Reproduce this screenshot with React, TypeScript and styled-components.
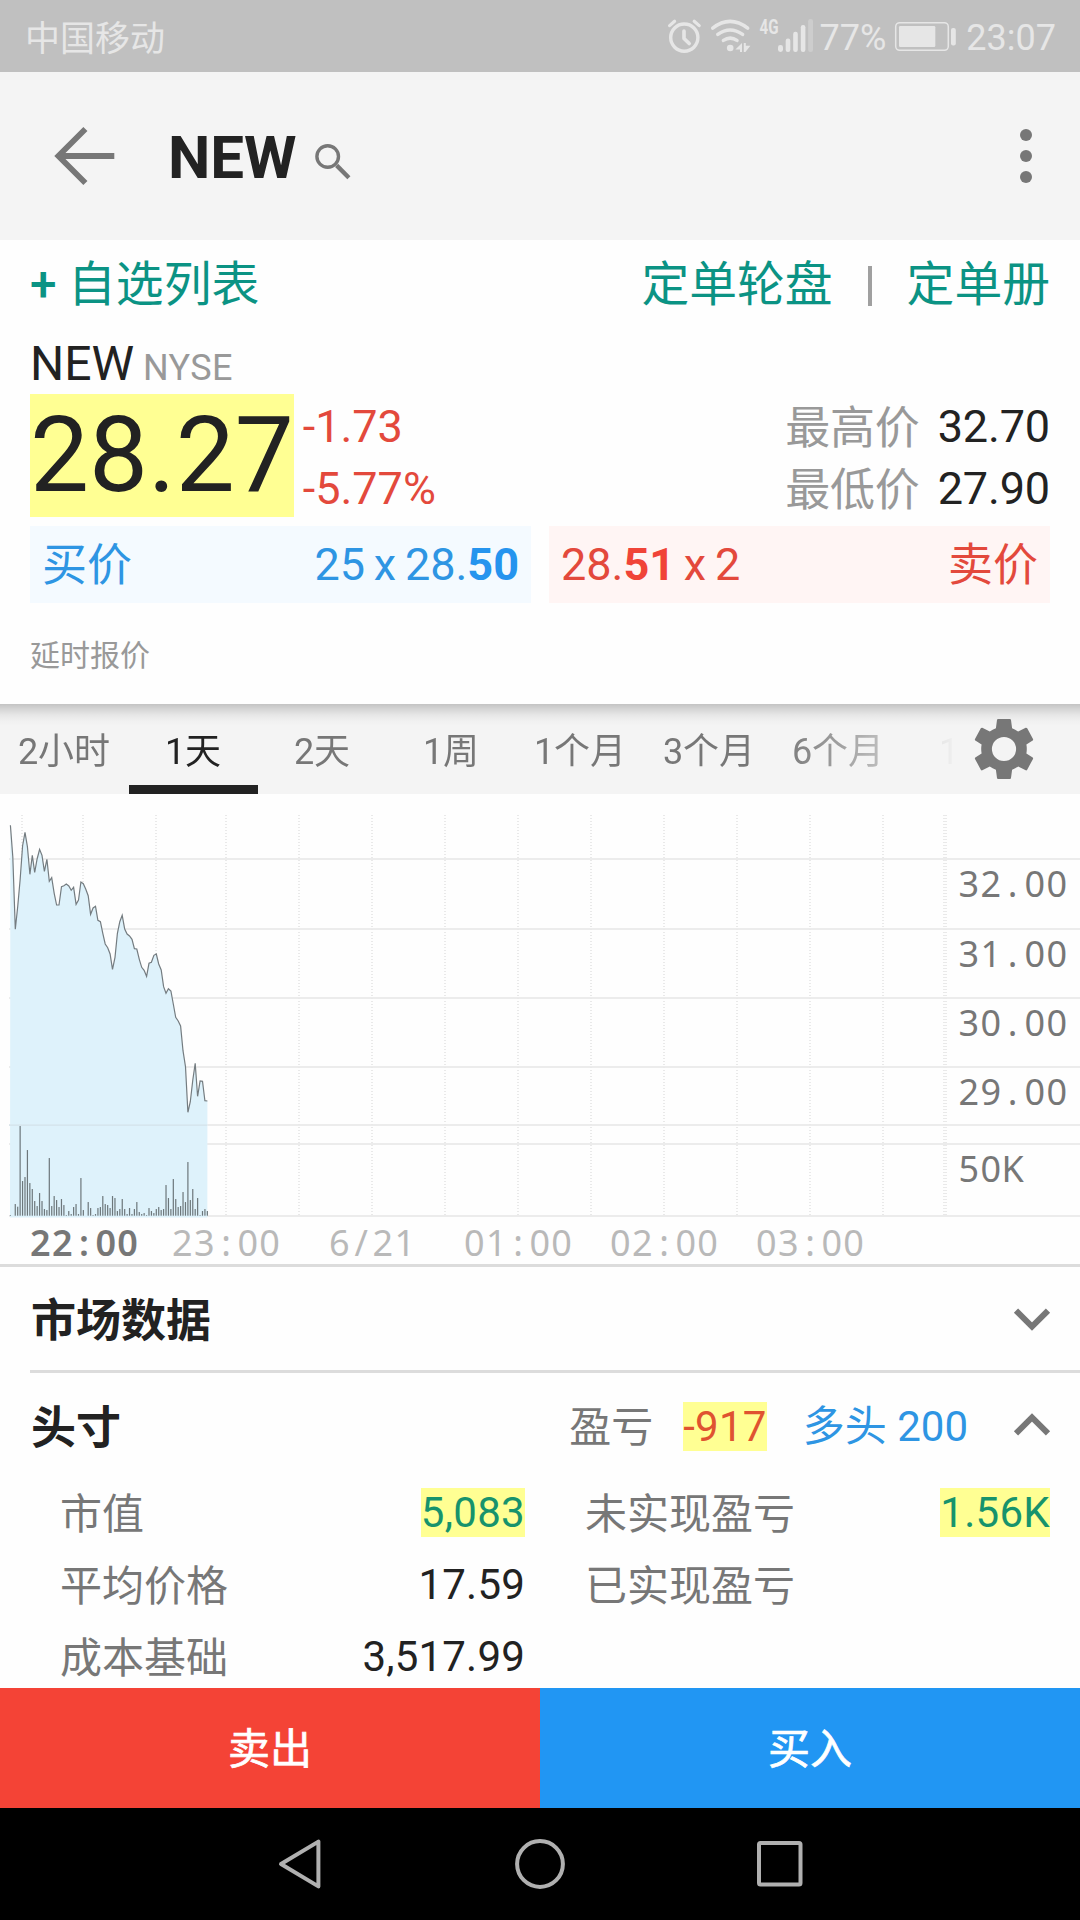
import React from "react";
import styled, { createGlobalStyle, css } from "styled-components";

const INK = "#222222";
const GRAY = "#777777";
const MUTED = "#999999";
const TEAL = "#0b9384";
const RED = "#e3493c";
const BLUE = "#2e95e3";
const HIGHLIGHT = "#ffff93";

const GlobalStyle = createGlobalStyle`
  * { box-sizing: border-box; }
  body {
    margin: 0;
    background: #fefefe;
    color: ${INK};
    font-family: Roboto, "Noto Sans CJK SC", sans-serif;
  }
  svg { display: block; flex: none; overflow: visible; }
`;

const Screen = styled.main`
  width: 1080px;
  height: 1920px;
  display: flex;
  flex-direction: column;
  overflow: hidden;
  background: #fefefe;
`;

/* ---------- status bar ---------- */

const StatusBar = styled.div`
  height: 72px;
  flex: none;
  display: flex;
  align-items: center;
  padding: 3px 24px 0 25px;
  background: #c0c0c0;
  color: #e6e6e6;
  font-size: 36px;
  line-height: 36px;
`;

const Carrier = styled.span`
  flex: 1;
  padding-top: 4px;
  font-size: 35px;
`;

const StatusIcon = styled.svg<{ $gap: number }>`
  margin: -3px 0 0 ${(p) => p.$gap}px;
`;

const StatusText = styled.span<{ $gap: number }>`
  margin-left: ${(p) => p.$gap}px;
`;

/* ---------- header ---------- */

const Header = styled.header`
  height: 168px;
  flex: none;
  display: flex;
  align-items: center;
  padding: 0 48px 0 54px;
  background: #f4f4f4;
`;

const Title = styled.h1`
  margin: 4px 17px 0 53px;
  font-size: 60px;
  line-height: 60px;
  font-weight: 700;
`;

const Spacer = styled.div`
  flex: 1;
`;

const SearchIcon = styled.svg`
  margin-top: 10px;
`;

/* ---------- quote ---------- */

const Quote = styled.section`
  height: 464px;
  flex: none;
  padding: 0 30px;
`;

const Links = styled.nav`
  height: 89px;
  display: flex;
  align-items: center;
  padding-top: 1px;
  color: ${TEAL};
  font-size: 47.8px;
  line-height: 56px;
`;

const Plus = styled.span`
  margin-right: 11.5px;
  font-weight: 500;
`;

const Divider = styled.i`
  width: 4px;
  height: 40px;
  margin: 2px 35px 0;
  background: #a0a0a0;
`;

const SymbolLine = styled.div`
  height: 65px;
  padding-top: 4px;
  font-size: 48px;
  line-height: 61px;
`;

const Exchange = styled.span`
  margin-left: 9px;
  font-size: 36px;
  letter-spacing: 0.3px;
  color: ${MUTED};
`;

const PriceRow = styled.div`
  height: 132px;
  display: flex;
  align-items: flex-start;
`;

const Last = styled.div`
  height: 123px;
  font-size: 105px;
  line-height: 124px;
  background: ${HIGHLIGHT};
`;

const Change = styled.div`
  flex: 1;
  padding: 2px 0 0 9px;
  font-size: 45px;
  line-height: 62px;
  color: ${RED};
`;

const Range = styled.div`
  display: grid;
  grid-template-columns: auto auto;
  column-gap: 18px;
  padding-top: 2px;
  font-size: 45px;
  line-height: 62px;
  letter-spacing: -0.15px;
`;

const RangeLabel = styled.span`
  height: 62px;
  padding-top: 2px;
  color: ${MUTED};
`;

const BookRow = styled.div`
  display: grid;
  grid-template-columns: 1fr 1fr;
  column-gap: 18px;
`;

const BookSide = styled.div<{ $side: "bid" | "ask" }>`
  height: 77px;
  display: flex;
  justify-content: space-between;
  padding: 0 12px;
  font-size: 45px;
  line-height: 77px;
  ${(p) =>
    p.$side === "bid"
      ? css`
          color: ${BLUE};
          background: #f4faff;
        `
      : css`
          color: ${RED};
          background: #fff5f4;
        `}
  b {
    font-weight: 700;
    color: ${(p) => (p.$side === "bid" ? "#2594ee" : "#f04438")};
  }
`;

const SideName = styled.span`
  padding-top: 1px;
`;

const Size = styled.span`
  word-spacing: -2.4px;
`;

const Delayed = styled.p`
  margin: 0;
  padding-top: 35px;
  font-size: 30px;
  line-height: 36px;
  color: ${MUTED};
`;

/* ---------- period tabs ---------- */

const TabBar = styled.nav`
  height: 90px;
  flex: none;
  display: flex;
  align-items: center;
  background: linear-gradient(
      to bottom,
      rgba(0, 0, 0, 0.2) 0,
      rgba(0, 0, 0, 0.13) 5px,
      rgba(0, 0, 0, 0.055) 11px,
      rgba(0, 0, 0, 0.015) 17px,
      rgba(0, 0, 0, 0) 22px
    )
    #f4f4f4;
`;

const Tabs = styled.div`
  width: 974px;
  height: 90px;
  display: flex;
  overflow: hidden;
  mask-image: linear-gradient(to right, #000 780px, transparent 960px);
`;

const Tab = styled.span<{ $active?: boolean }>`
  flex: none;
  width: 129px;
  height: 90px;
  padding: 5px 1px 0 0;
  text-align: center;
  font-size: 36px;
  line-height: 86px;
  color: ${(p) => (p.$active ? INK : GRAY)};
  box-shadow: ${(p) => (p.$active ? `inset 0 -9px 0 ${INK}` : "none")};
`;

/* ---------- sections ---------- */

const ChartBox = styled.section`
  height: 473px;
  flex: none;
  border-bottom: 3px solid #dcdcdc;
`;

const AxisText = styled.text<{ $tone: "price" | "time" | "current" }>`
  font-family: "Noto Sans", sans-serif;
  font-size: 36px;
  text-anchor: middle;
  font-weight: ${(p) => (p.$tone === "current" ? 600 : 400)};
  fill: ${(p) => (p.$tone === "time" ? "#b9b9b9" : GRAY)};
`;

const SectionHead = styled.div<{ $ruled?: boolean }>`
  height: ${(p) => (p.$ruled ? 106 : 101)}px;
  flex: none;
  display: flex;
  align-items: center;
  margin-left: 30px;
  padding: ${(p) => (p.$ruled ? 2 : 5)}px 30px 0 0;
  border-bottom: ${(p) => (p.$ruled ? "3px solid #dcdcdc" : "0")};
  font-size: 42px;
  line-height: 49px;
`;

const SectionTitle = styled.h2`
  margin: 0;
  flex: 1;
  padding: 4px 0 0 1px;
  font-size: 45px;
  font-weight: 700;
`;

const Label = styled.span`
  padding-top: 2px;
  color: ${GRAY};
`;

const Mark = styled.span<{ $color: string }>`
  height: 49px;
  line-height: 49px;
  letter-spacing: 0.3px;
  color: ${(p) => p.$color};
  background: ${HIGHLIGHT};
`;

const Pnl = styled(Mark)`
  margin: 0 36px 0 30px;
`;

const Holding = styled.span`
  margin-right: 46px;
  padding-top: 1px;
  color: ${BLUE};
`;

const Position = styled.div`
  flex: 1;
  min-height: 0;
  overflow: hidden;
  display: grid;
  grid-template-columns: 1fr 1fr;
  grid-auto-rows: 72px;
  column-gap: 60px;
  padding: 2px 30px 0 60px;
`;

const Field = styled.div`
  display: flex;
  align-items: center;
  justify-content: space-between;
  font-size: 42px;
  line-height: 49px;
`;

const FieldLabel = styled(Label)`
  padding-top: 5px;
`;

const FieldValue = styled.span`
  letter-spacing: 0.2px;
`;

/* ---------- bottom ---------- */

const Actions = styled.div`
  height: 120px;
  flex: none;
  display: grid;
  grid-template-columns: 1fr 1fr;
`;

const Action = styled.button<{ $color: string }>`
  border: 0;
  padding: 3px 0 0;
  font: 400 42px/117px Roboto, "Noto Sans CJK SC", sans-serif;
  -webkit-text-stroke: 0.7px #fff;
  color: #fff;
  background: ${(p) => p.$color};
`;

const NavBar = styled.footer`
  height: 112px;
  flex: none;
  display: flex;
  align-items: center;
  justify-content: center;
  gap: 190px;
  background: #000;
`;

/* ---------- chart data ---------- */

// Horizontal position of minute i within the plot.
const minuteX = (i: number) => 10.4 + i * 2.4315;

const PRICE_Y = [
  76, 170, 388, 320, 240, 137, 97, 140, 223, 166, 217, 177, 148, 166, 214, 178, 244, 233, 280,
  315, 315, 260, 257, 252, 258, 271, 262, 313, 300, 246, 251, 268, 287, 343, 324, 319, 361, 365,
  400, 432, 443, 462, 508, 472, 400, 365, 346, 387, 402, 408, 418, 446, 447, 478, 502, 511, 529,
  490, 487, 466, 462, 492, 510, 560, 580, 566, 573, 612, 652, 663, 678, 752, 800, 937, 905, 840,
  790, 889, 843, 844, 902, 903,
].map((v) => v / 3 + 6);

const VOLUME = [
  2, 0, 35, 27, 269, 104, 116, 197, 98, 80, 44, 29, 68, 44, 20, 17, 173, 29, 59, 47, 26, 50, 32, 2,
  14, 5, 26, 35, 5, 113, 17, 0, 41, 23, 2, 5, 23, 26, 59, 35, 32, 23, 59, 53, 14, 20, 50, 20, 5, 23,
  5, 20, 41, 11, 5, 8, 2, 23, 14, 8, 20, 26, 17, 20, 92, 53, 20, 110, 50, 26, 29, 71, 41, 161, 47,
  80, 20, 53, 2, 14, 20, 14,
].map((v) => v / 3);

const ROWS = [65, 135, 204, 273, 331, 350, 422];
const COLUMNS = [22, 83, 156, 226, 299, 372, 445, 518, 591, 664, 737, 810, 883];
const PRICES: [string, number][] = [
  ["32.00", 103],
  ["31.00", 173],
  ["30.00", 242],
  ["29.00", 311],
  ["50K", 388],
];
const TIMES: [string, number][] = [
  ["22:00", 84],
  ["23:00", 226],
  ["6/21", 372],
  ["01:00", 518],
  ["02:00", 664],
  ["03:00", 810],
];

// Centres of fixed-width character cells, starting at a left edge.
const cells = (text: string, left: number, pitch: number) =>
  [...text].map((_, i) => (left + pitch * (i + 0.5)).toFixed(1)).join(" ");

function PriceChart() {
  const line = PRICE_Y.map((y, i) => `${minuteX(i).toFixed(1)},${y.toFixed(1)}`).join(" ");
  const end = minuteX(PRICE_Y.length - 1);
  return (
    <svg width="1080" height="470" viewBox="0 0 1080 470">
      {ROWS.map((y) => (
        <rect key={y} x="9" y={y - 1} width="1071" height="2" fill="#ececec" />
      ))}
      {COLUMNS.map((x) => (
        <path key={x} d={`M${x} 21V422`} stroke="#e9e9e9" strokeWidth="2" strokeDasharray="1 2" />
      ))}
      <path d="M945 21V422" stroke="#e9e9e9" strokeWidth="4" strokeDasharray="1 2" />
      <polygon points={`${line} ${end},423.6 10,423.6`} fill="#def2fb" />
      <rect x="9" y="330.5" width="198" height="1.2" fill="#d3e2e9" />
      <polyline points={line} fill="none" stroke="#747c80" strokeWidth="1.2" />
      {VOLUME.map((v, i) => (
        <rect key={i} x={minuteX(i) - 0.6} y={421.7 - v} width="1.2" height={v} fill="#6d777b" />
      ))}
      {PRICES.map(([t, y]) => (
        <AxisText key={t} $tone="price" x={cells(t, 957.7, 22)} y={y}>
          {t}
        </AxisText>
      ))}
      {TIMES.map(([t, x], i) => (
        <AxisText
          key={t}
          $tone={i === 0 ? "current" : "time"}
          x={cells(t, x - (t.length * 21.8) / 2, 21.8)}
          y={462}
        >
          {t}
        </AxisText>
      ))}
    </svg>
  );
}

/* ---------- icons ---------- */

function StatusIcons() {
  const c = "#e6e6e6";
  return (
    <>
      <StatusIcon $gap={0} width="34" height="36" viewBox="668 18 34 36" fill="none" stroke={c}>
        <circle cx="685.3" cy="37.6" r="13.6" strokeWidth="3.4" />
        <path d="M685 31v7.4l5.2 5.2" strokeWidth="3.6" strokeLinecap="round" strokeLinejoin="round" />
        <path d="M670.6 25.6l5-4.4M700.2 25.6l-5-4.4" strokeWidth="3.2" strokeLinecap="round" />
      </StatusIcon>
      <StatusIcon $gap={9} width="42" height="36" viewBox="711 18 42 36" fill="none" stroke={c}>
        <path
          d="M713.7 28.2q17.3-13.6 35 0M718.8 34.4q12.2-8.8 24.8 0M724.4 40.4q6.8-4.6 13.6 0"
          strokeWidth="3.5"
          strokeLinecap="round"
        />
        <circle cx="731.2" cy="48" r="3.3" fill={c} stroke="none" />
        <path d="M743 43v9h-2v-2.6h-4.6zM744.8 43h2v2.8h4.6l-5 6.2h-1.6z" fill={c} stroke="none" />
      </StatusIcon>
      <StatusIcon $gap={7} width="55" height="36" viewBox="760 18 55 36" fill={c}>
        <text
          x="760.5"
          y="33.8"
          fontFamily="Roboto, sans-serif"
          fontWeight="700"
          fontSize="20.5"
          textLength="19"
          lengthAdjust="spacingAndGlyphs"
        >
          4G
        </text>
        <rect x="779" y="45" width="5" height="7" rx="2.4" />
        <rect x="786.7" y="38.5" width="4.6" height="13.5" rx="2.2" />
        <rect x="794.2" y="31.7" width="4.6" height="20.3" rx="2.2" />
        <rect x="801.8" y="25" width="4.6" height="27" rx="2.2" />
        <rect x="809.2" y="19" width="4.8" height="33" rx="2.2" fill="#cdcdcd" />
      </StatusIcon>
      <StatusText $gap={6}>77%</StatusText>
      <StatusIcon $gap={8} width="63" height="36" viewBox="895 18 63 36" fill={c}>
        <rect x="896.7" y="22.7" width="52.6" height="27.6" rx="4" fill="none" stroke={c} strokeWidth="1.5" />
        <rect x="900" y="26" width="36.3" height="21" rx="1.2" />
        <rect x="952" y="28" width="4.8" height="17.5" rx="2" />
      </StatusIcon>
      <StatusText $gap={9}>23:07</StatusText>
    </>
  );
}

function Gear() {
  return (
    <svg width="60" height="60" viewBox="-30 -30 60 60">
      <path
        fill={GRAY}
        fillRule="evenodd"
        d="M-6 -30H6Q6.8 -30 7 -29L8.1 -20.7Q11.5 -19.3 14.2 -17.4L21.7 -21.3Q22.6 -21.6 23.2 -20.7L29 -9.9Q29.4 -9 28.7 -8.4L22.4 -4.5Q23.2 0 22.4 4.5L28.7 8.4Q29.4 9 29 9.9L23.2 20.7Q22.6 21.6 21.7 21.3L14.2 17.4Q11.5 19.3 8.1 20.7L7 29Q6.8 30 6 30H-6Q-6.8 30 -7 29L-8.1 20.7Q-11.5 19.3 -14.2 17.4L-21.7 21.3Q-22.6 21.6 -23.2 20.7L-29 9.9Q-29.4 9 -28.7 8.4L-22.4 4.5Q-23.2 0 -22.4 -4.5L-28.7 -8.4Q-29.4 -9 -29 -9.9L-23.2 -20.7Q-22.6 -21.6 -21.7 -21.3L-14.2 -17.4Q-11.5 -19.3 -8.1 -20.7L-7 -29Q-6.8 -30 -6 -30ZM0 -12.1A12.1 12.1 0 1 0 0 12.1A12.1 12.1 0 1 0 0 -12.1Z"
      />
    </svg>
  );
}

function Chevron({ up }: { up?: boolean }) {
  return (
    <svg width="36" height="24" viewBox="0 0 36 24" fill="none" stroke={GRAY} strokeWidth="6">
      <path d={up ? "M2 19.4L18 3.4L34 19.4" : "M2 2.6L18 18.6L34 2.6"} />
    </svg>
  );
}

const PERIODS = ["2小时", "1天", "2天", "1周", "1个月", "3个月", "6个月", "1年"];

export default function App() {
  return (
    <Screen>
      <GlobalStyle />
      <StatusBar>
        <Carrier>中国移动</Carrier>
        <StatusIcons />
      </StatusBar>

      <Header>
        <svg width="61" height="60" viewBox="0 0 61 60" fill="none" stroke={GRAY} strokeWidth="5.8">
          <path d="M31.4 3L4.4 30L31.4 57M4.4 30H60.3" />
        </svg>
        <Title>NEW</Title>
        <SearchIcon width="38" height="38" viewBox="314 142 38 38" fill="none" stroke={GRAY}>
          <circle cx="327.7" cy="156.5" r="10.8" strokeWidth="3.4" />
          <path d="M336.6 165.4l12.3 12.3" strokeWidth="4.4" />
        </SearchIcon>
        <Spacer />
        <svg width="12" height="54" viewBox="0 0 12 54" fill={GRAY}>
          <circle cx="6" cy="6" r="6" />
          <circle cx="6" cy="27" r="6" />
          <circle cx="6" cy="48" r="6" />
        </svg>
      </Header>

      <Quote>
        <Links>
          <Plus>+</Plus>
          <span>自选列表</span>
          <Spacer />
          <span>定单轮盘</span>
          <Divider />
          <span>定单册</span>
        </Links>
        <SymbolLine>
          NEW<Exchange>NYSE</Exchange>
        </SymbolLine>
        <PriceRow>
          <Last>28.27</Last>
          <Change>
            <div>-1.73</div>
            <div>-5.77%</div>
          </Change>
          <Range>
            <RangeLabel>最高价</RangeLabel>
            <span>32.70</span>
            <RangeLabel>最低价</RangeLabel>
            <span>27.90</span>
          </Range>
        </PriceRow>
        <BookRow>
          <BookSide $side="bid">
            <SideName>买价</SideName>
            <Size>
              25 x 28.<b>50</b>
            </Size>
          </BookSide>
          <BookSide $side="ask">
            <Size>
              28.<b>51</b> x 2
            </Size>
            <SideName>卖价</SideName>
          </BookSide>
        </BookRow>
        <Delayed>延时报价</Delayed>
      </Quote>

      <TabBar>
        <Tabs>
          {PERIODS.map((p, i) => (
            <Tab key={p} $active={i === 1}>
              {p}
            </Tab>
          ))}
        </Tabs>
        <Gear />
      </TabBar>

      <ChartBox>
        <PriceChart />
      </ChartBox>

      <SectionHead $ruled>
        <SectionTitle>市场数据</SectionTitle>
        <Chevron />
      </SectionHead>
      <SectionHead>
        <SectionTitle>头寸</SectionTitle>
        <Label>盈亏</Label>
        <Pnl $color="#df5330">-917</Pnl>
        <Holding>多头 200</Holding>
        <Chevron up />
      </SectionHead>
      <Position>
        <Field>
          <FieldLabel>市值</FieldLabel>
          <Mark $color="#17936c">5,083</Mark>
        </Field>
        <Field>
          <FieldLabel>未实现盈亏</FieldLabel>
          <Mark $color="#17936c">1.56K</Mark>
        </Field>
        <Field>
          <FieldLabel>平均价格</FieldLabel>
          <FieldValue>17.59</FieldValue>
        </Field>
        <Field>
          <FieldLabel>已实现盈亏</FieldLabel>
        </Field>
        <Field>
          <FieldLabel>成本基础</FieldLabel>
          <FieldValue>3,517.99</FieldValue>
        </Field>
      </Position>

      <Actions>
        <Action $color="#f44336">卖出</Action>
        <Action $color="#2196f3">买入</Action>
      </Actions>
      <NavBar>
        <svg width="50" height="54" viewBox="0 0 50 54" fill="none" stroke="#b0b0b0" strokeWidth="4">
          <path d="M6 27L43.4 4.6V49.4Z" strokeLinejoin="round" />
        </svg>
        <svg width="50" height="50" viewBox="0 0 50 50" fill="none" stroke="#b0b0b0" strokeWidth="4">
          <circle cx="25" cy="25" r="22.9" />
        </svg>
        <svg width="50" height="50" viewBox="0 0 50 50" fill="none" stroke="#b0b0b0" strokeWidth="4">
          <rect x="4" y="4" width="41.5" height="41.5" rx="1.5" />
        </svg>
      </NavBar>
    </Screen>
  );
}
